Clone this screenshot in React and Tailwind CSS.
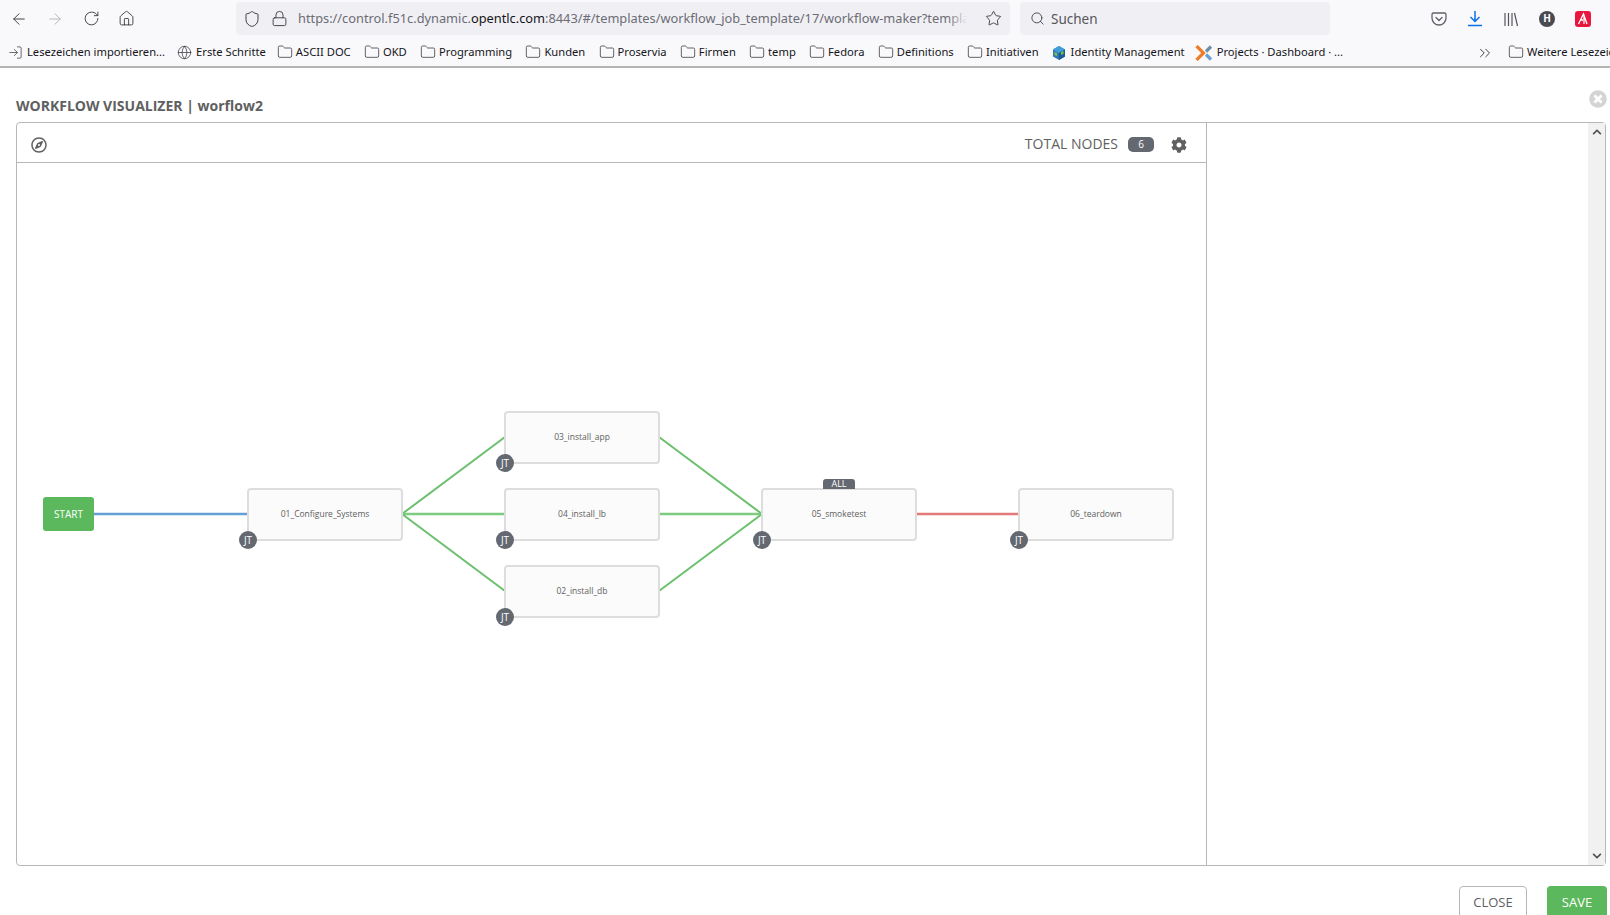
import { ArrowLeft, ArrowRight, RotateCw, Home, Shield, Lock, Star, Search, Folder, Globe, ChevronsRight, LogIn } from "lucide-react";
import { FaRegCompass, FaCog, FaTimesCircle, FaChevronUp, FaChevronDown } from "react-icons/fa";

const bookmarks = ["ASCII DOC", "OKD", "Programming", "Kunden", "Proservia", "Firmen", "temp", "Fedora", "Definitions", "Initiativen"];

const nodes = [
  { name: "01_Configure_Systems", x: 230, y: 325 },
  { name: "03_install_app", x: 487, y: 248 },
  { name: "04_install_lb", x: 487, y: 325 },
  { name: "02_install_db", x: 487, y: 402 },
  { name: "05_smoketest", x: 744, y: 325, badge: true },
  { name: "06_teardown", x: 1001, y: 325 },
];

const edges = [
  { x1: 77, y1: 351, x2: 231, y2: 351, color: "#659fd3", width: 2.5 },
  { x1: 385, y1: 351, x2: 488, y2: 274, color: "#6cc06c", width: 2 },
  { x1: 385, y1: 351, x2: 488, y2: 351, color: "#7fcb7f", width: 2.5 },
  { x1: 385, y1: 351, x2: 488, y2: 428, color: "#6cc06c", width: 2 },
  { x1: 642, y1: 274, x2: 745, y2: 351, color: "#6cc06c", width: 2 },
  { x1: 642, y1: 351, x2: 745, y2: 351, color: "#7fcb7f", width: 2.5 },
  { x1: 642, y1: 428, x2: 745, y2: 351, color: "#6cc06c", width: 2 },
  { x1: 899, y1: 351, x2: 1002, y2: 351, color: "#e27a7a", width: 2.5 },
];

function BookmarkFolder({ label, className = "" }) {
  return (
    <div className={`flex items-center gap-[3px] shrink-0 ${className}`}>
      <Folder size={16} strokeWidth={1.2} className="text-[#3c3c44] shrink-0" />
      <span>{label}</span>
    </div>
  );
}

function WorkflowNode({ node }) {
  return (
    <div
      className="absolute w-[156px] h-[53px] rounded-[4px] border-2 border-[#dddddd] bg-[#fbfbfb] flex items-center justify-center text-[8.5px] text-[#606060]"
      style={{ left: node.x, top: node.y }}
    >
      {node.name}
      <div className="absolute left-[-10px] bottom-[-10px] w-[18px] h-[18px] rounded-full bg-[#646871] text-white text-[10px] flex items-center justify-center">
        JT
      </div>
      {node.badge && (
        <div className="absolute left-[60px] top-[-11px] w-[32px] h-[10px] rounded-t-[3px] bg-[#646871] text-white text-[9px] leading-[10px] text-center">
          ALL
        </div>
      )}
    </div>
  );
}

export default function App() {
  return (
    <div className="h-[915px] w-[1610px] overflow-hidden bg-white font-['Open_Sans',sans-serif]">
      {/* browser toolbar */}
      <div className="h-[68px] bg-[#f9f9fb] border-b-2 border-[#b4b4b4] font-['Noto_Sans',sans-serif] text-[#15141a]">
        <div className="h-[36px] flex items-center pt-[1px]">
          <ArrowLeft size={18} strokeWidth={1.3} className="ml-[10px] text-[#3c3c44]" />
          <ArrowRight size={18} strokeWidth={1.3} className="ml-[18px] text-[#b5b5b9]" />
          <RotateCw size={17} strokeWidth={1.3} className="ml-[19px] text-[#3c3c44]" />
          <Home size={17} strokeWidth={1.3} className="ml-[18px] text-[#3c3c44]" />
          <div className="ml-[101px] h-[33px] w-[774px] rounded-[4px] bg-[#f0f0f4] flex items-center shrink-0">
            <Shield size={18} strokeWidth={1.3} className="ml-[7px] text-[#3c3c44] shrink-0" />
            <Lock size={17} strokeWidth={1.3} className="ml-[10px] text-[#3c3c44] shrink-0" />
            <div className="relative ml-[10px] w-[678px] pt-[1px] overflow-hidden whitespace-nowrap text-[12.8px] text-[#6c6c74]">
              https://control.f51c.dynamic.<span className="text-[#15141a]">opentlc.com</span>:8443/#/templates/workflow_job_template/17/workflow-maker?template_id=17
              <div className="absolute right-0 top-0 bottom-0 w-[28px] bg-gradient-to-r from-transparent to-[#f0f0f4] to-70%" />
            </div>
            <Star size={17} strokeWidth={1.3} className="ml-[9px] text-[#3c3c44] shrink-0" />
          </div>
          <div className="ml-[10px] h-[33px] w-[310px] rounded-[4px] bg-[#f0f0f4] flex items-center shrink-0 text-[13.5px] text-[#55555c]">
            <Search size={15} strokeWidth={1.4} className="ml-[10px] text-[#3c3c44]" />
            <span className="ml-[6px] pt-[1px]">Suchen</span>
          </div>
          <div className="ml-[101px] flex items-center shrink-0">
            <svg width="16" height="16" viewBox="0 0 16 16" fill="none" stroke="#606068" strokeWidth="1.3">
              <path d="M2.500 2h11a1.500 1.500 0 0 1 1.500 1.500V7a7 7 0 0 1-14 0V3.500A1.500 1.500 0 0 1 2.500 2z" />
              <path d="M5 6.500l3 3 3-3" strokeLinecap="round" strokeLinejoin="round" />
            </svg>
            <svg width="16" height="17" viewBox="0 0 16 17" fill="none" stroke="#0b6fe8" strokeWidth="1.500" className="ml-[20px]">
              <path d="M8 1v10M3.500 7L8 11.500 12.500 7M1 15.500h14" />
            </svg>
            <svg width="16" height="16" viewBox="0 0 16 16" fill="none" stroke="#55555c" strokeWidth="1.200" className="ml-[20px]">
              <path d="M2 2v13M5.500 2v13M9 2v13M11.500 2l3 13" />
            </svg>
            <div className="ml-[20px] w-[16px] h-[16px] rounded-full bg-[#4a4a52] text-white text-[10px] font-bold flex items-center justify-center">
              H
            </div>
            <svg width="16" height="16" viewBox="0 0 16 16" className="ml-[20px]">
              <rect width="16" height="16" rx="3" fill="#e8173f" />
              <path d="M3.500 13L8.500 3l3.500 10M5 9h3M9 3.500V13" fill="none" stroke="#ffffff" strokeWidth="1.300" />
            </svg>
          </div>
        </div>
        <div className="h-[30px] flex items-center text-[11.2px] whitespace-nowrap pt-[3px]">
          <LogIn size={15} strokeWidth={1.2} className="ml-[8px] text-[#3c3c44] shrink-0" />
          <span className="ml-[4px]">Lesezeichen importieren...</span>
          <Globe size={15} strokeWidth={1.2} className="ml-[12px] text-[#3c3c44] shrink-0" />
          <span className="ml-[4px]">Erste Schritte</span>
          {bookmarks.map((label, i) => (
            <BookmarkFolder key={label} label={label} className={i === 0 ? "ml-[11px]" : "ml-[13.25px]"} />
          ))}
          <svg width="16" height="16" viewBox="0 0 16 16" className="ml-[12px] shrink-0">
            <path d="M8 1l6 3.500v7L8 15l-6-3.500v-7z" fill="#2f78b7" />
            <path d="M8 1l6 3.500L8 8 2 4.500z" fill="#3f9fd8" />
            <path d="M8 8l6-3.500v7L8 15z" fill="#1c5a94" />
            <path d="M10 7l2.500-1v3L10 10zM3.500 7L6 8v3L3.500 10z" fill="#7dc04a" />
          </svg>
          <span className="ml-[4px]">Identity Management</span>
          <svg width="18" height="16" viewBox="0 0 18 16" className="ml-[10px] shrink-0">
            <path d="M1.500 1l7 7-7 7" fill="none" stroke="#ef7c2a" strokeWidth="3.200" />
            <path d="M16 1.500L11 6.500" fill="none" stroke="#6d8fa8" strokeWidth="3.200" />
            <path d="M11 9.500L16 14.500" fill="none" stroke="#6d9fd0" strokeWidth="3.200" />
          </svg>
          <span className="ml-[4px]">Projects · Dashboard · ...</span>
          <ChevronsRight size={18} strokeWidth={1.3} className="ml-[133px] text-[#3c3c44] shrink-0" />
          <BookmarkFolder label="Weitere Lesezeichen" className="ml-[14px]" />
        </div>
      </div>

      {/* workflow modal */}
      <div className="relative pl-[16px] pr-[3px]">
        <FaTimesCircle size={18} className="absolute right-[3px] top-[22px] text-[#d4d4d4]" />
        <div className="h-[54px] pt-[28px] text-[14px] leading-[19px] font-bold text-[#606060] whitespace-nowrap">
          WORKFLOW VISUALIZER | worflow2
        </div>
        <div className="w-[1590px] h-[744px] flex rounded-[4px] border border-[#b7b7b7]">
          <div className="w-[1190px] shrink-0 flex flex-col border-r border-[#b7b7b7]">
            <div className="h-[40px] shrink-0 border-b border-[#b7b7b7] flex items-center pt-[3px] text-[#606060]">
              <FaRegCompass size={16} className="ml-[14px] mt-[2px]" />
              <span className="ml-auto mb-[2px] text-[14px]">TOTAL NODES</span>
              <span className="ml-[10px] w-[26px] h-[15px] rounded-[5px] bg-[#646871] text-white text-[10px] flex items-center justify-center">
                6
              </span>
              <FaCog size={16} className="ml-[17px] mr-[19px] mt-[2px]" />
            </div>
            <div className="relative grow">
              <svg className="absolute inset-0 w-full h-full">
                {edges.map((e, i) => (
                  <line key={i} x1={e.x1} y1={e.y1} x2={e.x2} y2={e.y2} stroke={e.color} strokeWidth={e.width} />
                ))}
              </svg>
              <div className="absolute left-[26px] top-[334px] w-[51px] h-[34px] rounded-[3px] bg-[#5cb85c] text-white text-[10px] font-medium flex items-center justify-center">
                START
              </div>
              {nodes.map((n) => (
                <WorkflowNode key={n.name} node={n} />
              ))}
            </div>
          </div>
          <div className="grow flex justify-end">
            <div className="w-[17px] bg-[#f1f1f1] flex flex-col items-center justify-between py-[4px] text-[#505050]">
              <FaChevronUp size={10} />
              <FaChevronDown size={10} />
            </div>
          </div>
        </div>
        <div className="flex justify-end gap-[20px] pt-[20px] text-[13px]">
          <div className="w-[68px] h-[34px] rounded-[4px] border border-[#b7b7b7] bg-white text-[#606060] flex items-center justify-center">
            CLOSE
          </div>
          <div className="w-[60px] h-[34px] rounded-[4px] bg-[#5cb85c] text-white flex items-center justify-center">
            SAVE
          </div>
        </div>
      </div>
    </div>
  );
}
